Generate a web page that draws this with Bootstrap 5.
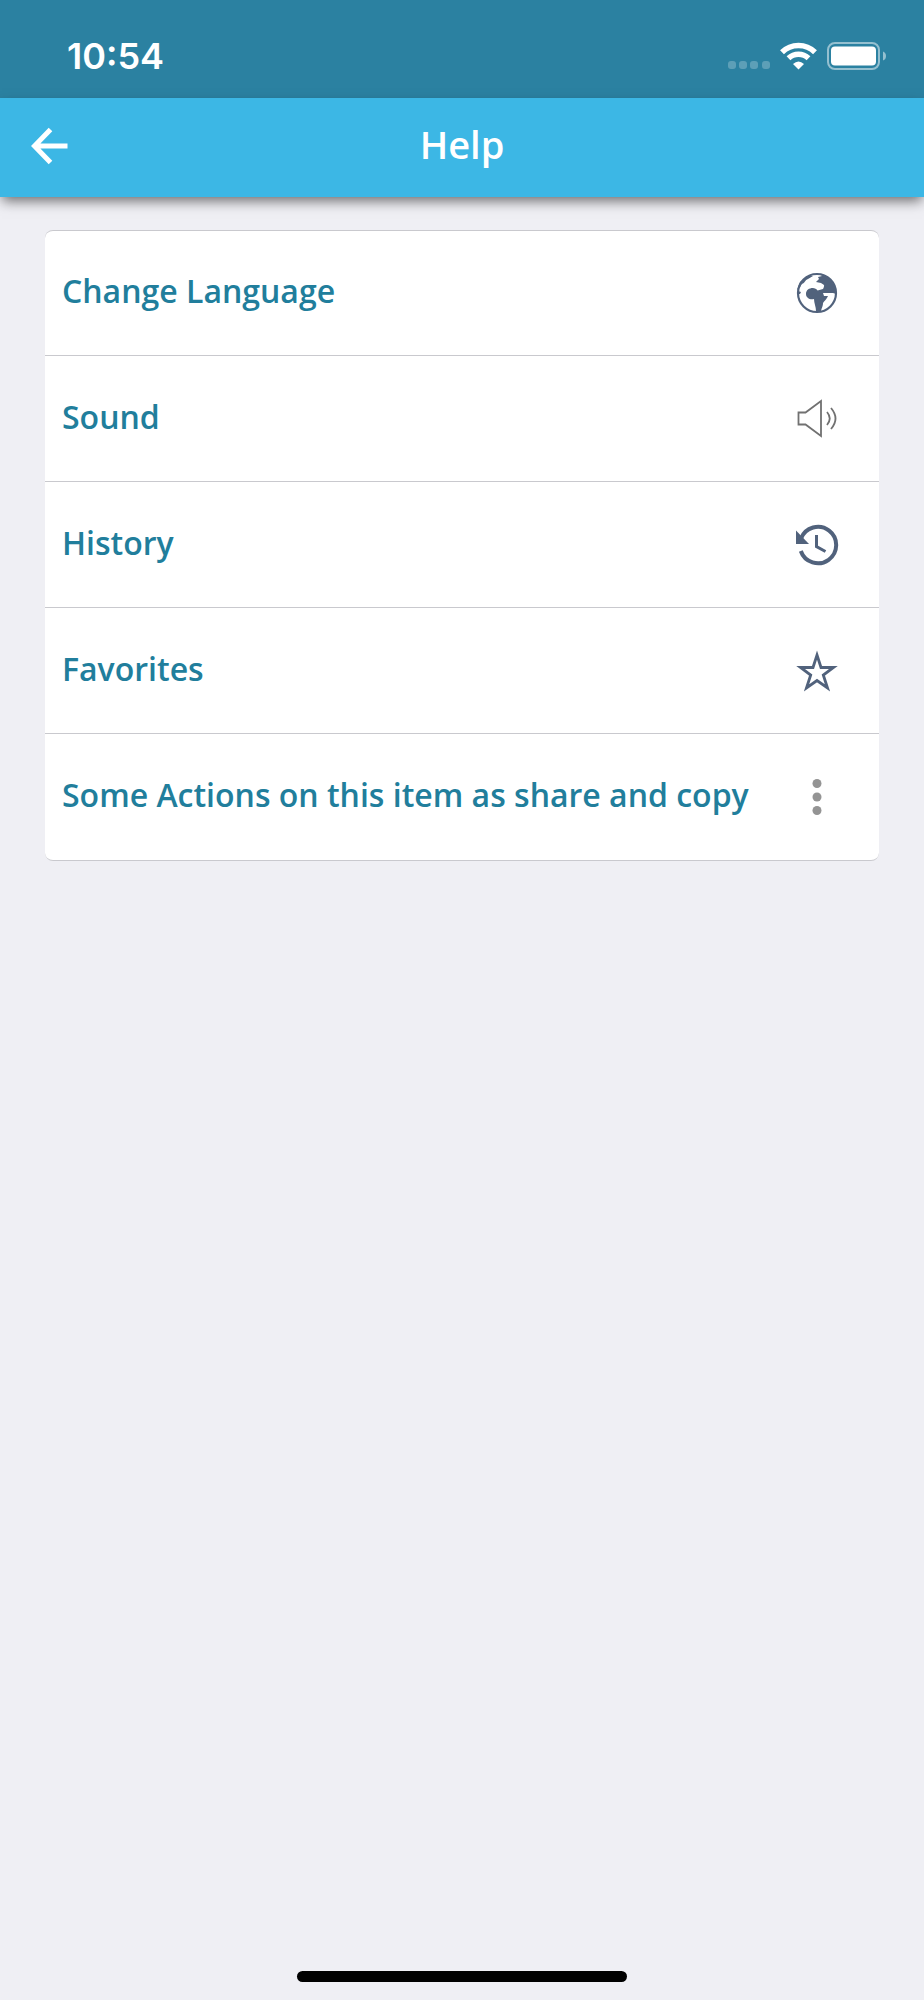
<!DOCTYPE html>
<html lang="en">
<head>
<meta charset="utf-8">
<meta name="viewport" content="width=device-width, initial-scale=1">
<title>Help</title>
<link href="https://cdn.jsdelivr.net/npm/bootstrap@5.3.0/dist/css/bootstrap.min.css" rel="stylesheet">
<style>
  body { background: #efeff4; font-family: "Open Sans", "Noto Sans", sans-serif; }
  .status-bar { background: #2b81a1; height: 98px; padding: 13px 36px 0 67px; }
  .clock { font: 600 36px/44px Inter, sans-serif; }
  .app-bar { background: #3cb7e5; height: 99px; padding-bottom: 3px; box-shadow: 0 6px 12px -2px rgba(0, 0, 0, .55); }
  .app-bar h1 { font-size: 38px; line-height: 48px; font-weight: 600; }
  .side { width: 100px; }
  .back { line-height: 0; }
  .menu { margin: 33px 45px 0; border-radius: 8px; }
  .menu .list-group-item { height: 126px; padding: 0 40px 0 17px; border: 0 solid #c9c9ce; border-top-width: 1px; color: #217e9c; font-size: 32px; line-height: 40px; font-weight: 600; }
  .menu .list-group-item:first-child { height: 125px; }
  .menu .list-group-item:last-child { height: 128px; border-bottom-width: 1px; }
  .menu .label-text { padding-bottom: 4px; }
  .home-bar { width: 330px; height: 11px; margin-bottom: 18px; background: #000; }
</style>
</head>
<body class="min-vh-100 d-flex flex-column">
<div class="status-bar d-flex align-items-center justify-content-between text-white">
  <span class="clock">10:54</span>
  <svg width="160" height="32" viewBox="0 0 160 32" aria-hidden="true">
    <g fill="#fff" fill-opacity=".24"><rect width="8" height="8" x="0" y="21" rx="3"/><rect width="8" height="8" x="11" y="21" rx="3"/><rect width="8" height="8" x="22" y="21" rx="3"/><rect width="8" height="8" x="34" y="21" rx="3"/></g>
    <g fill="none" stroke="#fff" stroke-width="5.5"><path d="M54 12.2a23.500 23.500 0 0 1 33 0"/><path d="M60.500 18.300a14.500 14.500 0 0 1 20 0"/></g>
    <path fill="#fff" d="M65 24q5.500-5 11 0l-5.500 5.500z"/>
    <rect x="100" y="3" width="51" height="26" rx="7" fill="none" stroke="#fff" stroke-opacity=".5" stroke-width="2"/>
    <rect x="103" y="6.500" width="45" height="19" rx="4" fill="#fff"/>
    <path fill="#fff" fill-opacity=".5" d="M155 11.500q3 1 3 4.500t-3 4.500z"/>
  </svg>
</div>
<header class="app-bar d-flex align-items-center text-white">
  <div class="side ps-4"><button type="button" class="back btn border-0 p-0 text-white" aria-label="Back"><svg width="52" height="44" viewBox="0 0 52 44" fill="none" stroke="currentColor" stroke-width="5"><path d="M26.500 5.500 10.500 22 26.500 38.500M10.500 22H43.500"/></svg></button></div>
  <h1 class="flex-fill text-center m-0 pb-1">Help</h1>
  <div class="side"></div>
</header>
<main class="flex-grow-1">
  <div class="menu list-group">
    <a href="#" class="list-group-item d-flex align-items-center justify-content-between"><span class="label-text">Change Language</span>
      <svg width="44" height="44" viewBox="0 0 44 44" fill="#51627c" aria-hidden="true"><circle cx="22" cy="22" r="19" fill="none" stroke="#51627c" stroke-width="2.200"/><path d="M3 18c3-1 2-3 4-5 3-1 3-4 6-5l5-3-5 0-8 6-3 8zM3 20l3 1-1 2H3zM25 5l3-1c6 2 11 8 13 15v4l-3-1-10 0 1 3 4 0c-1 3-4 5-5 7 0 3-1 4-2 8h-5c0-4-2-8-2-12-4 1-8-1-8-5 0-4 3-6 7-6l4 1 6 0 1-4-3-2-5-1 3-3-1-2 4-1z"/><path fill="none" stroke="#fff" stroke-width="2.500" d="M17 15l3 0 3 3 4-1 1-3"/></svg></a>
    <a href="#" class="list-group-item d-flex align-items-center justify-content-between"><span class="label-text">Sound</span>
      <svg width="44" height="44" viewBox="0 0 44 44" fill="none" stroke="#717171" stroke-width="1.800" aria-hidden="true"><path d="M3.500 15.500h7L26 4v35L10.500 27.500h-7z"/><path d="M32 15q5.500 6.500 0 13M36 11q9 10.500 0 21"/></svg></a>
    <a href="#" class="list-group-item d-flex align-items-center justify-content-between"><span class="label-text">History</span>
      <svg width="44" height="44" viewBox="0 0 44 44" fill="none" stroke="#51627c" stroke-width="4" aria-hidden="true"><path d="M6 15.500A18.200 18.200 0 1 1 5.800 28"/><path d="M21.500 12v11.500l9 5" stroke-width="3"/><path d="M1 7.500v13.500h13z" fill="#51627c" stroke="none"/></svg></a>
    <a href="#" class="list-group-item d-flex align-items-center justify-content-between"><span class="label-text">Favorites</span>
      <svg width="44" height="44" viewBox="0 0 44 44" fill="none" stroke="#51627c" stroke-width="2.800" aria-hidden="true"><path d="M22 6l4 12.500h12.500l-10.200 7.500 4.200 13L22 31.500 11.500 39l4.200-13L5.500 18.500H18z"/></svg></a>
    <a href="#" class="list-group-item d-flex align-items-center justify-content-between"><span class="label-text">Some Actions on this item as share and copy</span>
      <svg width="44" height="44" viewBox="0 0 44 44" fill="#949494" aria-hidden="true"><circle cx="22" cy="8.500" r="4.500"/><circle cx="22" cy="22" r="4.500"/><circle cx="22" cy="35.500" r="4.500"/></svg></a>
  </div>
</main>
<div class="home-bar rounded-pill mx-auto"></div>
<script src="https://cdn.jsdelivr.net/npm/bootstrap@5.3.0/dist/js/bootstrap.bundle.min.js"></script>
</body>
</html>
